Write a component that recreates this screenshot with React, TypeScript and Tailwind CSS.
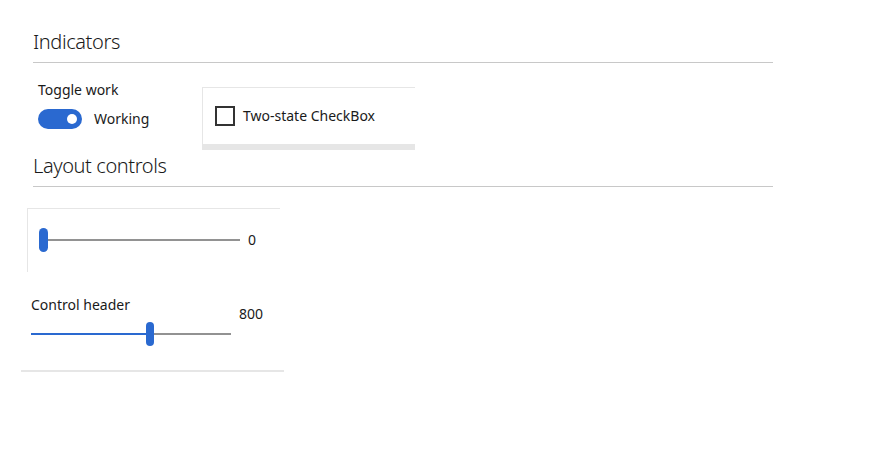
export default function App() {
    return (
        <div className="min-h-screen bg-white pl-[21px] pt-[28px] text-[#1a1a1a] [font-family:'Noto_Sans',sans-serif]">
            <h2 className="ml-[12px] h-[35px] w-[740px] border-b border-[#c8c8c8] text-[20px] font-light leading-[28px] tracking-[-0.4px]">
                Indicators
            </h2>

            <div className="ml-[17px] flex items-start">
                <div className="mt-[17px] w-[164px]">
                    <div className="text-[14px] leading-[20px]">Toggle work</div>
                    <div className="mt-[9px] flex h-[20px] items-center">
                        <div className="flex h-[20px] w-[44px] items-center justify-end rounded-full bg-[#2a69d0] pr-[5px]">
                            <div className="h-[10px] w-[10px] rounded-full bg-white"></div>
                        </div>
                        <span className="ml-[12px] text-[14px] leading-[20px]">Working</span>
                    </div>
                </div>

                <div className="mt-[24px] h-[63px] w-[213px] border-l border-t border-[#e6e6e6]">
                    <div className="flex h-[56px] items-start pl-[12px] pt-[18px]">
                        <div className="h-[20px] w-[20px] border-2 border-[#333]"></div>
                        <span className="ml-[8px] text-[14px] leading-[20px]">Two-state CheckBox</span>
                    </div>
                    <div className="h-[6px] bg-[#e6e6e6]"></div>
                </div>
            </div>

            <h2 className="ml-[12px] mt-[2px] h-[35px] w-[740px] border-b border-[#c8c8c8] text-[20px] font-light leading-[28px] tracking-[-0.4px]">
                Layout controls
            </h2>

            <div className="ml-[6px] mt-[21px] h-[64px] w-[253px] border-l border-t border-[#e6e6e6] pl-[11px] pt-[19px]">
                <div className="flex h-[24px] items-center">
                    <div className="h-[24px] w-[9px] rounded-full bg-[#2a69d0]"></div>
                    <div className="h-[2px] w-[192px] bg-[#929292]"></div>
                    <span className="ml-[8px] text-[14px] leading-[20px]">0</span>
                </div>
            </div>

            <div className="ml-[10px] mt-[23px] flex items-start">
                <div className="w-[200px]">
                    <div className="text-[14px] leading-[20px]">Control header</div>
                    <div className="mt-[7px] flex h-[24px] items-center">
                        <div className="h-[2px] w-[115px] bg-[#2a69d0]"></div>
                        <div className="h-[24px] w-[8px] rounded-full bg-[#2a69d0]"></div>
                        <div className="h-[2px] w-[77px] bg-[#929292]"></div>
                    </div>
                </div>
                <span className="ml-[8px] mt-[9px] text-[14px] leading-[20px]">800</span>
            </div>

            <div className="mt-[24px] h-[2px] w-[263px] bg-[#e6e6e6]"></div>
        </div>
    );
}
